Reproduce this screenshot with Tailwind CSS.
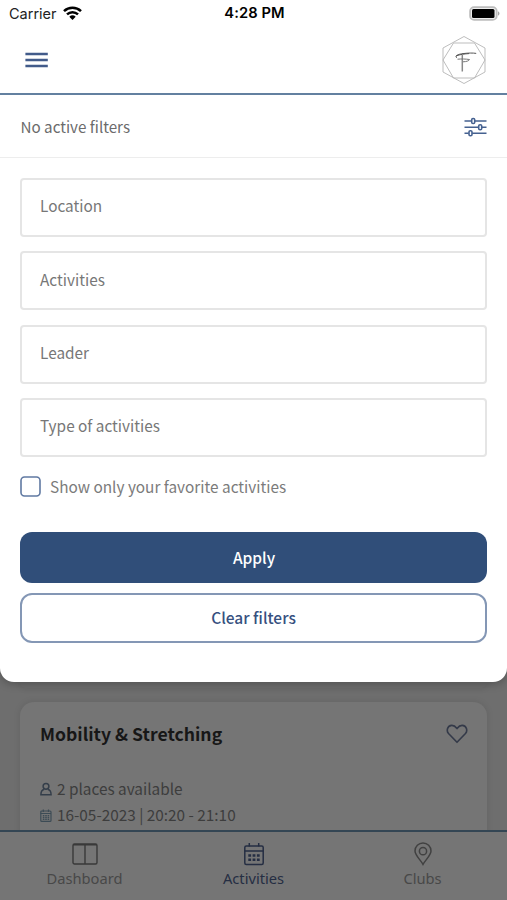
<!DOCTYPE html>
<html lang="en">
<head>
<meta charset="utf-8">
<title>Activities</title>
<script src="https://cdn.jsdelivr.net/npm/@tailwindcss/browser@4"></script>
</head>
<body class="w-[507px] h-[900px] overflow-hidden flex flex-col bg-[#6e6e6e] font-['Noto_Sans_CJK_SC',sans-serif] text-[15.35px] text-[#6b6b6b]">
<section class="relative z-10 h-[682px] shrink-0 bg-white rounded-b-[14px] shadow-[0_2px_8px_rgba(0,0,0,0.25)]">
  <div class="h-[27px] grid grid-cols-3 items-center pl-[9px] pr-[7px] font-['Inter',sans-serif] text-black">
    <div class="flex items-center gap-[6px] text-[14.5px] leading-[27px] text-[#222]"><span>Carrier</span>
      <svg class="w-[19px] h-[14px] -mt-[2px]" viewBox="0 0 19 14" fill="none" stroke="#000" stroke-width="2.5"><path d="M1 5.1a12.3 12.3 0 0 1 17 0M4 8.4a8 8 0 0 1 11 0"/><path d="M6.3 10.7a4.8 4.8 0 0 1 6.4 0L9.5 14z" fill="#000" stroke="none"/></svg>
    </div>
    <div class="text-center text-[14.7px] leading-[27px] font-semibold tracking-[0.1px]">4:28 PM</div>
    <svg class="justify-self-end w-[31px] h-[15px]" viewBox="0 0 31 15"><rect x="1.1" y="1.1" width="26.6" height="12.8" rx="4" fill="#eee" stroke="#bdbdbd" stroke-width="1.8"/><rect x="3" y="3" width="22.5" height="9" rx="1.5" fill="#000"/><path d="M29 5.3c2 .8 2 3.6 0 4.4z" fill="#a5a5a5"/></svg>
  </div>
  <header class="h-[68px] flex items-center justify-between pl-[25px] pr-[20px] border-b-2 border-[#6380a0]">
    <svg class="w-[23px] h-[16px]" viewBox="0 0 23 16" stroke="#425b8a" stroke-width="2.5"><path d="M.4 2h22.400M.4 8h22.400M.4 14h22.400"/></svg>
    <svg class="w-[46px] h-[50px]" viewBox="0 0 46 50" fill="none"><g stroke="#b5b5b5" stroke-width=".9"><path d="M23 1.5 44 13v24L23 48.5 2 37V13z"/><path d="M12.5 8h21L44 25 33.5 43h-21L2 25z"/></g><path d="M16 22.800c-3-1.800 1-3.600 6-4.200 5-.6 10-.8 13.200-.2M15 21c4-1.600 9-2.200 13-2.400" stroke="#555" stroke-width="1"/><path d="M21.300 20v16.500" stroke="#888" stroke-width="1.500"/><path d="M16.500 24.200c4-.4 8-.2 12 .3-.5 1.400-3 2.200-6.500 2.300" stroke="#777" stroke-width="1"/></svg>
  </header>
  <div class="h-[63px] flex items-center justify-between pl-[20.5px] pr-[20px] border-b border-[#ededed]">
    <span class="text-[15.2px]">No active filters</span>
    <svg class="w-[23px] h-[21px] mt-[2px]" viewBox="0 0 23 21" fill="none" stroke="#456190" stroke-width="1.6"><path d="M.5 4h7M11 4h11.500M.5 10.300h13.800M18 10.300h4.500M.5 16.300h4.200M8.200 16.300h14.300"/><rect x="7.700" y="1.500" width="3" height="5" rx="1.300"/><rect x="14.700" y="7.800" width="3" height="5" rx="1.300"/><rect x="5" y="13.800" width="3" height="5" rx="1.300"/></svg>
  </div>
  <form class="px-[20px] pt-[20px] flex flex-col">
    <div class="flex flex-col gap-[14.300px] text-[#777]">
      <div class="h-[59px] border-2 border-[#e5e5e5] rounded-[4px] pl-[18px] pb-[3px] flex items-center">Location</div>
      <div class="h-[59px] border-2 border-[#e5e5e5] rounded-[4px] pl-[18px] pb-[3px] flex items-center">Activities</div>
      <div class="h-[59px] border-2 border-[#e5e5e5] rounded-[4px] pl-[18px] pb-[3px] flex items-center">Leader</div>
      <div class="h-[59px] border-2 border-[#e5e5e5] rounded-[4px] pl-[18px] pb-[3px] flex items-center">Type of activities</div>
    </div>
    <label class="mt-[18px] h-[24px] flex items-center gap-[9px] text-[#7b7b7b]"><svg class="size-[21px]" viewBox="0 0 21 21"><rect x="1" y="1" width="19" height="19" rx="3.500" fill="none" stroke="#6079a2" stroke-width="1.600"/></svg><span>Show only your favorite activities</span></label>
    <button type="button" class="mt-[33px] h-[51px] rounded-[12px] bg-[#304e79] text-white font-medium text-[15.5px] pl-[1px]">Apply</button>
    <button type="button" class="mt-[10px] h-[50px] rounded-[12px] border-2 border-[#8497b5] text-[#36507f] font-medium text-[15.5px] pb-[1px]">Clear filters</button>
  </form>
</section>
<main class="flex-1 min-h-0 overflow-hidden px-[20px]">
  <div class="h-[6px] rounded-b-[12px] bg-[#6c6c6c] shadow-[0_0_7px_rgba(0,0,0,0.1)]"></div>
  <article class="mt-[14px] h-[200px] rounded-[14px] bg-[#757575] shadow-[0_0_7px_rgba(0,0,0,0.1)] px-[20px] pt-[18px] text-[#3d3d3d]">
    <div class="flex justify-between items-center h-[28px]">
      <h2 class="text-[17.6px] leading-[28px] font-bold text-[#171717]">Mobility &amp; Stretching</h2>
      <svg class="w-[22px] h-[20px] -mr-[1px]" viewBox="0 0 23 21" fill="none" stroke="#343a49" stroke-width="1.700" stroke-linejoin="round"><path d="M11.500 19.200 2.600 10C.2 7.300 1.200 1.700 6 1.500c2.600-.1 4.100 1.500 5.500 3.300C12.900 3 14.400 1.400 17 1.500c4.800.2 5.800 5.800 3.400 8.500z"/></svg>
    </div>
    <div class="mt-[28px] flex items-center gap-[5px] h-[26px]">
      <svg class="w-[12px] h-[14px]" viewBox="0 0 12 14" fill="none" stroke="#343e4a" stroke-width="1.500"><circle cx="6" cy="4.300" r="2.900"/><path d="M4 7.600C1.500 8 1 9.500.9 12.700h10.200C11 9.500 10.500 8 8 7.600"/></svg><span>2 places available</span>
    </div>
    <div class="flex items-center gap-[5px] h-[26px]">
      <svg class="w-[12px] h-[13px]" viewBox="0 0 12 13" fill="none" stroke="#3c4b55" stroke-width="1.200"><rect x=".8" y="2" width="10.200" height="10.400" rx="1"/><path d="M.6 4.500h10.400M3.300 .5v2.500M8.500 .5v2.500"/><path d="M2.800 6.700h6.600M2.800 8.500h6.600M2.800 10.300h6.600" stroke-width="1.300" stroke-dasharray="1.600 .8"/></svg><span>16-05-2023 | 20:20 - 21:10</span>
    </div>
  </article>
</main>
<nav class="relative z-10 h-[70px] shrink-0 border-t-2 border-[#344654] bg-[#757575] grid grid-cols-3 font-['Noto_Sans',sans-serif] text-[14.7px] text-[#484848]">
  <div class="flex flex-col items-center pt-[10px]"><svg class="w-[26px] h-[24px]" viewBox="0 0 26 24" fill="none" stroke="#393939" stroke-width="1.400"><rect x="1" y="2" width="24" height="20" rx="1.500"/><path d="M1 2.700h24M13 2v20"/></svg><span class="leading-[24px]">Dashboard</span></div>
  <div class="flex flex-col items-center pt-[10px] text-[#252e43]"><svg class="w-[22px] h-[24px]" viewBox="0 0 22 24" fill="none" stroke="#252e43" stroke-width="1.500"><rect x="1.800" y="4" width="18.400" height="18.400" rx="1.500"/><path d="M1.800 9h18.400M6.300 1v3.500M15.700 1v3.500"/><path d="M5.300 13.500h12M5.300 17.800h12" stroke-width="2.600" stroke-dasharray="2.800 1.500"/></svg><span class="leading-[24px]">Activities</span></div>
  <div class="flex flex-col items-center pt-[10px]"><svg class="w-[18px] h-[24px]" viewBox="0 0 18 24" fill="none" stroke="#414141" stroke-width="1.500"><path d="M9 22.300C7 18.500 1 13.300 1 9a8 8 0 0 1 16 0c0 4.300-6 9.500-8 13.300z"/><circle cx="9" cy="9.200" r="3.600"/></svg><span class="leading-[24px]">Clubs</span></div>
</nav>
</body>
</html>
